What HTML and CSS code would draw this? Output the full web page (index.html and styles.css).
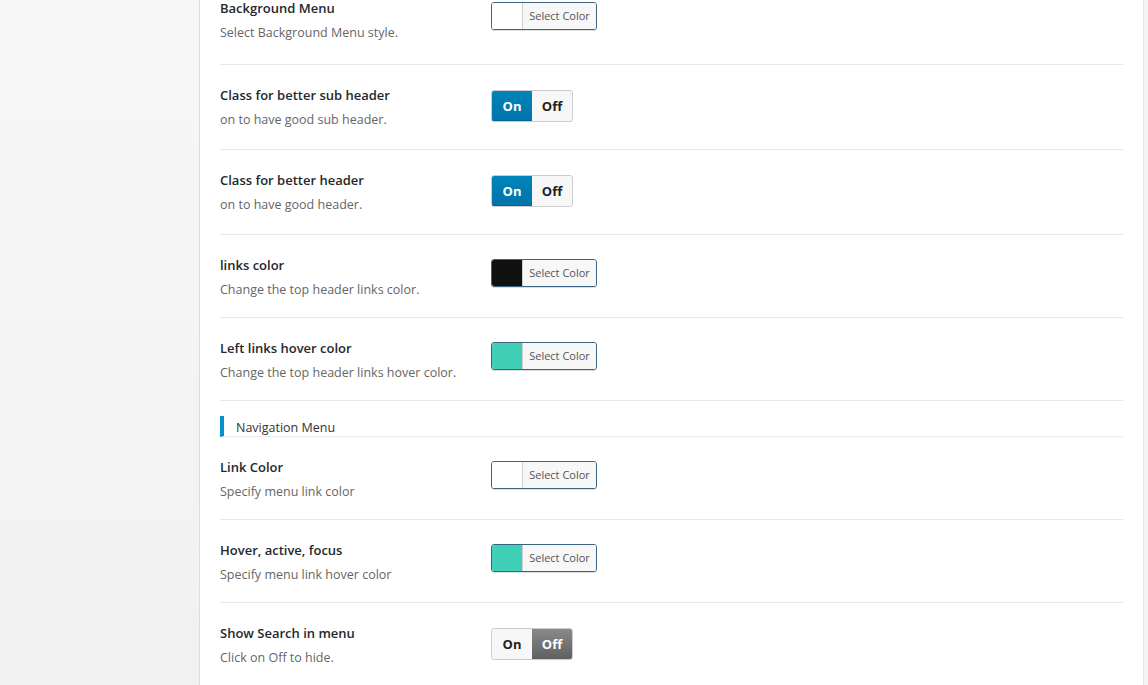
FILE: index.html
```html
<!DOCTYPE html>
<html>
<head>
<meta charset="utf-8">
<link rel="stylesheet" href="styles.css">
</head>
<body>
<div class="page">
  <aside class="sidebar"></aside>
  <main class="main">
    <div class="options">
      <div class="row first">
        <div class="label"><div class="title">Background Menu</div><div class="desc">Select Background Menu style.</div></div>
        <div class="control"><span class="picker"><span class="swatch" style="background:#ffffff"></span><span class="pick-btn">Select Color</span></span></div>
      </div>
      <div class="row row-toggle">
        <div class="label"><div class="title">Class for better sub header</div><div class="desc">on to have good sub header.</div></div>
        <div class="control"><span class="toggle"><span class="seg on active">On</span><span class="seg off">Off</span></span></div>
      </div>
      <div class="row row-toggle">
        <div class="label"><div class="title">Class for better header</div><div class="desc">on to have good header.</div></div>
        <div class="control"><span class="toggle"><span class="seg on active">On</span><span class="seg off">Off</span></span></div>
      </div>
      <div class="row">
        <div class="label"><div class="title">links color</div><div class="desc">Change the top header links color.</div></div>
        <div class="control"><span class="picker"><span class="swatch" style="background:#111111"></span><span class="pick-btn">Select Color</span></span></div>
      </div>
      <div class="row">
        <div class="label"><div class="title">Left links hover color</div><div class="desc">Change the top header links hover color.</div></div>
        <div class="control"><span class="picker"><span class="swatch" style="background:#40d0b8"></span><span class="pick-btn">Select Color</span></span></div>
      </div>
      <div class="section">Navigation Menu</div>
      <div class="row">
        <div class="label"><div class="title">Link Color</div><div class="desc">Specify menu link color</div></div>
        <div class="control"><span class="picker"><span class="swatch" style="background:#ffffff"></span><span class="pick-btn">Select Color</span></span></div>
      </div>
      <div class="row">
        <div class="label"><div class="title">Hover, active, focus</div><div class="desc">Specify menu link hover color</div></div>
        <div class="control"><span class="picker"><span class="swatch" style="background:#40d0b8"></span><span class="pick-btn">Select Color</span></span></div>
      </div>
      <div class="row row-toggle last">
        <div class="label"><div class="title">Show Search in menu</div><div class="desc">Click on Off to hide.</div></div>
        <div class="control"><span class="toggle"><span class="seg on">On</span><span class="seg off active">Off</span></span></div>
      </div>
    </div>
  </main>
  <div class="rightstrip"></div>
</div>
</body>
</html>
```
FILE: styles.css
```css
html, body {
  margin: 0;
  padding: 0;
  height: 100%;
  overflow: hidden;
}
body {
  font-family: "Open Sans", "Noto Sans", sans-serif;
  font-size: 13px;
  color: #23282d;
  background: #fff;
}
.page {
  display: flex;
  height: 685px;
}
.sidebar {
  width: 199px;
  flex: none;
  background: linear-gradient(to bottom, #f7f7f7, #f1f1f1);
  border-right: 1px solid #dcdcdc;
}
.main {
  flex: 1;
  background: #fff;
  padding: 0 20px 0 20px;
  overflow: hidden;
}
.rightstrip {
  width: 4px;
  flex: none;
  background: #f3f3f3;
  border-left: 1px solid #e2e2e2;
}
.options {
  margin-top: -22px;
}
.row {
  display: flex;
  padding: 20px 0 17px;
  border-bottom: 1px solid #e6e6e6;
}
.row.first {
  padding-bottom: 21px;
}
.row-toggle {
  padding-bottom: 19px;
}
.label {
  width: 271px;
  flex: none;
}
.title {
  font-weight: 600;
  font-size: 13px;
  line-height: 20px;
  color: #23282d;
}
.desc {
  margin-top: 5px;
  font-size: 12.5px;
  line-height: 20px;
  color: #666;
}
.control {
  padding-top: 4px;
}
.row-toggle .control {
  padding-top: 5px;
}
.picker {
  display: inline-flex;
  height: 26px;
  border: 1px solid #3c6584;
  border-radius: 3px;
  overflow: hidden;
  box-shadow: 0 1px 0 #ddd;
}
.swatch {
  width: 30px;
  border-right: 1px solid #cfcfcf;
}
.pick-btn {
  width: 73px;
  background: #f7f7f7;
  font-size: 11px;
  line-height: 26px;
  color: #555;
  text-align: center;
}
.toggle {
  display: inline-flex;
  height: 30px;
  border: 1px solid #ccc;
  border-radius: 3px;
  overflow: hidden;
  background: #f7f7f7;
}
.seg {
  font-weight: 700;
  font-size: 13px;
  line-height: 30px;
  text-align: center;
  color: #222;
}
.seg.on { width: 40px; }
.seg.off { width: 40px; }
.seg.on.active {
  background: linear-gradient(to bottom, #0085ba, #0073aa);
  color: #fff;
  box-shadow: inset 0 -1px 0 #006799;
}
.seg.off.active {
  background: linear-gradient(to bottom, #8a8a8a, #5f5f5f);
  color: #fff;
}
.section {
  margin-top: 15px;
  height: 20px;
  border-left: 4px solid #0a8fcf;
  border-bottom: 1px solid #ededed;
  padding-left: 12px;
  font-size: 12.5px;
  line-height: 23px;
  color: #333;
  box-shadow: 0 1px 2px rgba(0,0,0,0.03);
}
```
